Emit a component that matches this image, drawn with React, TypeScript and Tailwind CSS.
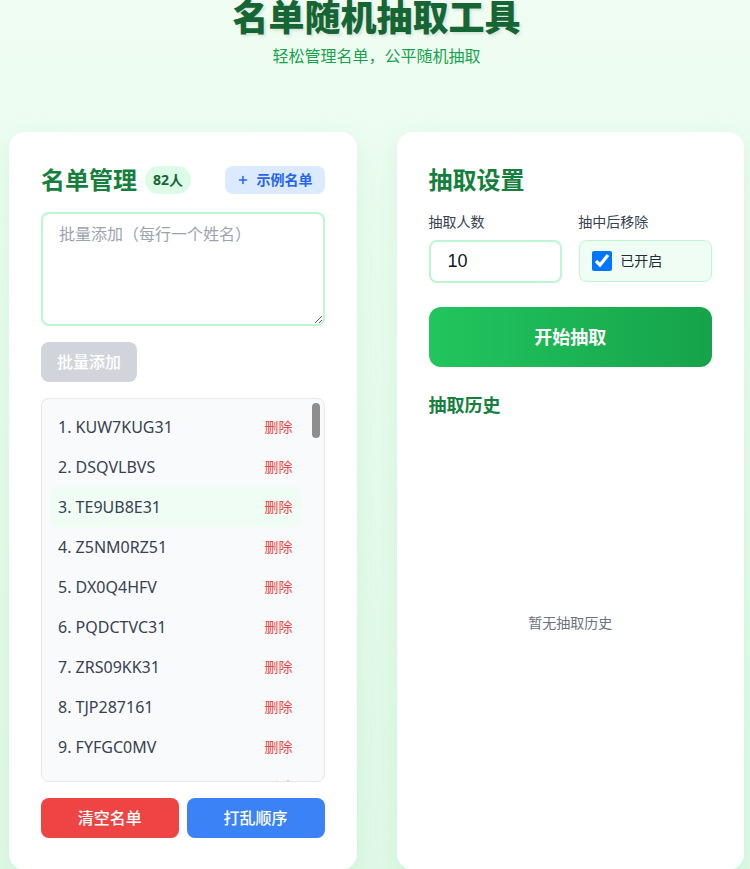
import { useState } from 'react';
import { Plus } from 'lucide-react';

const FIRST = ['KUW7KUG31', 'DSQVLBVS', 'TE9UB8E31', 'Z5NM0RZ51', 'DX0Q4HFV', 'PQDCTVC31', 'ZRS09KK31', 'TJP287161', 'FYFGC0MV'];

function makeNames(total: number): string[] {
  const chars = 'ABCDEFGHIJKLMNOPQRSTUVWXYZ0123456789';
  let seed = 7;
  const rnd = () => {
    seed = (seed * 9301 + 49297) % 233280;
    return seed / 233280;
  };
  const out = [...FIRST];
  while (out.length < total) {
    let s = '';
    const len = 8 + Math.floor(rnd() * 2);
    for (let i = 0; i < len; i++) s += chars[Math.floor(rnd() * chars.length)];
    out.push(s);
  }
  return out;
}

export default function App() {
  const [names] = useState(() => makeNames(82));
  const [count, setCount] = useState('10');
  const [removeAfter, setRemoveAfter] = useState(true);

  return (
    <div className="min-h-screen bg-gradient-to-b from-[#effdf3] to-[#e2f9e8] pl-[9px] pr-[6px] font-['Noto_Sans','Noto_Sans_CJK_SC',sans-serif]">
      <header className="text-center">
        <h1 className="text-[36px] leading-[36px] font-black text-[#166534] [text-shadow:2px_2px_3px_rgba(0,0,0,0.1)]">
          名单随机抽取工具
        </h1>
        <p className="mt-2 text-base leading-6 text-[#16a34a]">轻松管理名单，公平随机抽取</p>
      </header>

      <div className="mt-16 grid grid-cols-2 gap-10">
        {/* 名单管理 */}
        <section className="rounded-2xl bg-white p-8 shadow-[0_10px_30px_rgba(34,197,94,0.12)]">
          <div className="flex h-8 items-center">
            <h2 className="text-2xl leading-8 font-bold text-[#15803d]">名单管理</h2>
            <span className="ml-2 rounded-full bg-[#dcfce7] px-2 text-sm leading-7 font-bold text-[#166534]">82人</span>
            <button className="ml-auto flex h-7 items-center gap-2 rounded-lg bg-[#dbeafe] px-3 text-sm font-bold text-[#2563eb]">
              <Plus className="h-3 w-3" strokeWidth={3} />
              示例名单
            </button>
          </div>

          <textarea
            className="mt-4 block h-[114px] w-full resize-y rounded-lg border-2 border-[#bbf7d0] px-4 py-2 text-base leading-6 text-[#374151] outline-none placeholder:text-[#9ca3af]"
            placeholder="批量添加（每行一个姓名）"
          />

          <button className="mt-4 h-10 rounded-lg bg-[#d1d5db] px-4 text-base font-medium text-white">批量添加</button>

          {/* list + scrollbar column */}
          <div className="mt-4 flex h-96 overflow-hidden rounded-lg border border-[#e5e7eb] bg-[#f9fafb]">
            <ul className="h-full flex-1 overflow-y-auto p-2 [scrollbar-width:none]">
              {names.map((n, i) => (
                <li
                  key={i}
                  className={`flex h-10 items-center justify-between rounded-lg px-2 ${i === 2 ? 'bg-[#f0fdf4]' : ''}`}
                >
                  <span className="text-base leading-6 text-[#374151]">
                    {i + 1}. {n}
                  </span>
                  <button className="text-sm text-[#ef4444]">删除</button>
                </li>
              ))}
            </ul>
            <div className="w-[15px] shrink-0 pt-1">
              <div className="mx-auto h-[35px] w-2 rounded-full bg-[#8e8e8e]" />
            </div>
          </div>

          <div className="mt-4 grid grid-cols-2 gap-2">
            <button className="h-10 rounded-lg bg-[#ef4444] text-base font-medium text-white">清空名单</button>
            <button className="h-10 rounded-lg bg-[#3b82f6] text-base font-medium text-white">打乱顺序</button>
          </div>
        </section>

        {/* 抽取设置 */}
        <section className="flex flex-col rounded-2xl bg-white p-8 shadow-[0_10px_30px_rgba(34,197,94,0.12)]">
          <h2 className="text-2xl leading-8 font-bold text-[#15803d]">抽取设置</h2>

          <div className="mt-4 grid grid-cols-2 gap-4">
            <div>
              <label className="block text-sm leading-5 text-[#374151]">抽取人数</label>
              <input
                value={count}
                onChange={(e) => setCount(e.target.value)}
                className="mt-2 block h-[43px] w-full rounded-lg border-2 border-[#bbf7d0] pr-4 pl-[17px] font-['Liberation_Sans',sans-serif] text-lg text-[#111827] outline-none"
              />
            </div>
            <div>
              <label className="block text-sm leading-5 text-[#374151]">抽中后移除</label>
              <label className="mt-2 ml-px flex h-[42px] items-center gap-2 rounded-lg border-[1.5px] border-[#bbf7d0] bg-[#f0fdf4] px-3">
                <input
                  type="checkbox"
                  checked={removeAfter}
                  onChange={(e) => setRemoveAfter(e.target.checked)}
                  className="h-5 w-5"
                />
                <span className="text-sm text-[#1f2937]">已开启</span>
              </label>
            </div>
          </div>

          <button className="mt-6 h-[60px] w-full rounded-xl bg-gradient-to-r from-[#22c55e] to-[#16a34a] text-lg font-bold text-white">
            开始抽取
          </button>

          <h3 className="mt-6 text-lg leading-7 font-bold text-[#15803d]">抽取历史</h3>
          <div className="mt-3 flex h-96 items-center justify-center">
            <p className="text-sm text-[#6b7280]">暂无抽取历史</p>
          </div>
        </section>
      </div>
    </div>
  );
}
